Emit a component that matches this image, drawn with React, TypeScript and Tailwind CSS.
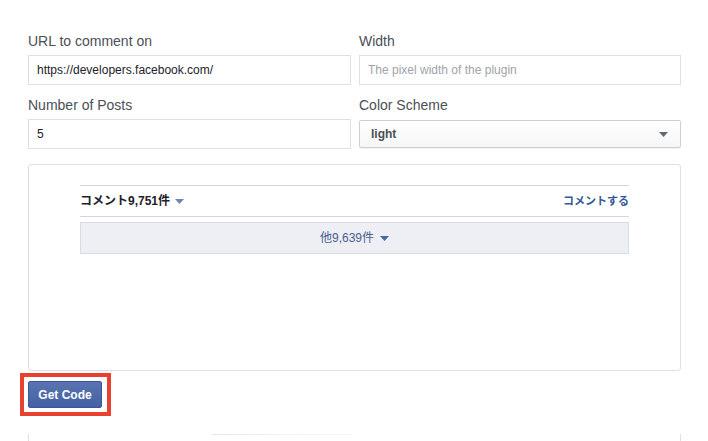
import React from "react";

function Caret({ className }: { className: string }) {
  return (
    <svg width="9" height="5" viewBox="0 0 9 5" className={className}>
      <path d="M0 0h9L4.5 5z" fill="currentColor" />
    </svg>
  );
}

function Field({ label, children }: { label: string; children: React.ReactNode }) {
  return (
    <div className="flex flex-col">
      <label className="mb-[5px] text-[14px] leading-[18px] text-[#4b4f56]">{label}</label>
      {children}
    </div>
  );
}

const inputClass =
  "h-[30px] w-full border border-[#dddfe2] bg-white px-[8px] text-[12px] text-[#1d2129] outline-none placeholder:text-[#a0a3a9]";

export default function App() {
  return (
    <div className="h-[441px] w-[708px] overflow-hidden bg-white font-['Liberation_Sans','Noto_Sans_CJK_JP',sans-serif]">
      <div className="pl-[28px] pr-[27px] pt-[32px]">
        <div className="grid grid-cols-[323px_322px] gap-x-[8px] gap-y-[11px]">
          <Field label="URL to comment on">
            <input className={inputClass} defaultValue="https://developers.facebook.com/" />
          </Field>
          <Field label="Width">
            <input className={inputClass} placeholder="The pixel width of the plugin" />
          </Field>
          <Field label="Number of Posts">
            <input className={inputClass} defaultValue="5" />
          </Field>
          <Field label="Color Scheme">
            <div className="mt-[1px] flex h-[28px] items-center justify-between rounded-[2px] border border-[#ccd0d5] bg-gradient-to-b from-white to-[#f5f6f7] pl-[11px] pr-[12px] shadow-[0_1px_1px_rgba(0,0,0,0.05)]">
              <span className="text-[12px] font-bold text-[#4b4f56]">light</span>
              <Caret className="text-[#606770]" />
            </div>
          </Field>
        </div>

        <div className="mt-[15px] h-[207px] rounded-[3px] border border-[#dddfe2] px-[51px] pt-[20px]">
          <div className="flex h-[32px] items-center justify-between border-y border-[#d3d6db]">
            <div className="flex items-center gap-[5px] text-[12px] font-bold text-[#1d2129]">
              <span>コメント9,751件</span>
              <Caret className="mt-[1px] text-[#6d84b4]" />
            </div>
            <span className="text-[11px] font-bold text-[#365899]">コメントする</span>
          </div>
          <div className="mt-[5px] flex h-[32px] items-center justify-center gap-[6px] border border-[#d8dce6] bg-[#edeff4] text-[12px] text-[#4b5f91]">
            <span>他9,639件</span>
            <Caret className="mt-[1px] text-[#4a67a8]" />
          </div>
        </div>

        <div className="relative mt-[10px] h-[27px] w-[74px]">
          <button className="h-[27px] w-[74px] rounded-[2px] border border-[#3b5795] bg-gradient-to-b from-[#5a74b0] to-[#4261a4] text-[12px] font-bold text-white">
            Get Code
          </button>
          <span className="pointer-events-none absolute -bottom-[8px] -left-[8px] -right-[9px] -top-[8px] border-4 border-[#e8412f]" />
        </div>

        <div className="relative mt-[26px] h-[40px] border-x border-[#dddfe2]">
          <div className="ml-[183px] h-px w-[140px] bg-gradient-to-r from-[#e4e6e9] via-[#f2f3f5] to-[#f7f7f8]" />
        </div>
      </div>
    </div>
  );
}
